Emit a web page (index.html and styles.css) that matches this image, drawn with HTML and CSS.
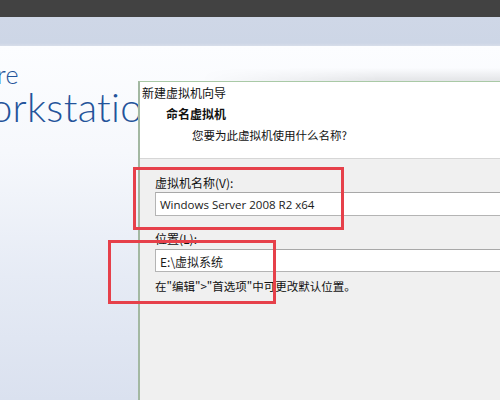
FILE: index.html
```html
<!DOCTYPE html>
<html lang="zh-CN">
<head>
<meta charset="utf-8">
<title>新建虚拟机向导</title>
<link rel="stylesheet" href="styles.css">
</head>
<body>
<div class="screen">
  <div class="topbar"></div>
  <div class="tabband"></div>
  <div class="desktop">
    <div class="brand">
      <div class="brand-vendor">VMware</div>
      <div class="brand-product">Workstation</div>
    </div>
    <div class="dialog">
      <div class="dialog-head">
        <div class="dialog-title">新建虚拟机向导</div>
        <div class="step-title">命名虚拟机</div>
        <div class="step-desc">您要为此虚拟机使用什么名称?</div>
      </div>
      <div class="dialog-body">
        <label class="field-label">虚拟机名称(V):</label>
        <div class="textbox">Windows Server 2008 R2 x64</div>
        <label class="field-label field-label-2">位置(L):</label>
        <div class="textbox textbox-2">E:\虚拟系统</div>
        <div class="hint">在"编辑"&gt;"首选项"中可更改默认位置。</div>
      </div>
    </div>
  </div>
  <div class="mark mark-name"></div>
  <div class="mark mark-location"></div>
</div>
</body>
</html>
```

FILE: styles.css
```css
* { box-sizing: border-box; }

html, body {
  margin: 0;
  padding: 0;
  width: 500px;
  height: 400px;
  overflow: hidden;
  background: #ffffff;
  font-family: "Noto Sans CJK SC", "Noto Sans", sans-serif;
}

.screen {
  position: relative;
  width: 500px;
  height: 400px;
  display: flex;
  flex-direction: column;
  overflow: hidden;
}

.topbar {
  height: 17px;
  background: #424242;
  flex: none;
}

.tabband {
  height: 29px;
  background: linear-gradient(#cfd7e7, #cdd6e6 90%, #d8deea);
  flex: none;
}

.desktop {
  flex: 1;
  display: flex;
  background: linear-gradient(to bottom, #fcfdff 0%, #f6f8fc 30%, #e6ebf5 65%, #dae1ef 100%);
}

/* product logo on the left, clipped by the window edge */
.brand {
  width: 138px;
  flex: none;
  overflow: hidden;
  color: #23539a;
  font-family: "Lato", "Open Sans", sans-serif;
  font-weight: 300;
  white-space: nowrap;
}

.brand-vendor {
  margin-top: 15px;
  margin-left: -75px;
  font-size: 25px;
  line-height: 26px;
  letter-spacing: 0.5px;
}

.brand-product {
  margin-left: -49px;
  font-size: 40px;
  line-height: 40px;
  letter-spacing: 0.3px;
}

.dialog {
  position: relative;
  flex: 1;
  margin-top: 35px;
  border-top: 1px solid #a9c9a6;
  border-left: 2px solid #a3b8a2;
  background: #f0f0f0;
}

/* faint shadow of the window edge */
.dialog::before {
  content: "";
  position: absolute;
  top: -14px;
  left: 60px;
  right: 0;
  height: 13px;
  background: linear-gradient(to bottom, rgba(0,0,0,0), rgba(0,0,0,0.09));
  -webkit-mask-image: linear-gradient(to right, transparent, #000 60%);
  mask-image: linear-gradient(to right, transparent, #000 60%);
}

.dialog-head {
  background: #ffffff;
  padding: 2px 0 14px 2px;
  border-bottom: 1px solid #d6d6d6;
  font-size: 12px;
  line-height: 18px;
  color: #111;
}

.step-title {
  margin-top: 3px;
  padding-left: 24px;
  font-weight: 700;
}

.step-desc {
  margin-top: 3px;
  padding-left: 50px;
  font-size: 11.5px;
}

.dialog-body {
  padding: 16px 0 0 15px;
  display: flex;
  flex-direction: column;
  font-size: 12px;
  line-height: 16px;
  color: #111;
}

.field-label { display: block; }

.field-label-2 { margin-top: 15px; }

.textbox {
  margin-top: 1px;
  margin-right: -20px;
  height: 24px;
  padding: 3px 4px 0 4px;
  background: #ffffff;
  border: 1px solid #b4b4b4;
  border-top-color: #a8a8a8;
  font-family: "Open Sans", "Noto Sans CJK SC", sans-serif;
  font-size: 11.5px;
  line-height: 17px;
  color: #1a1a1a;
}

.textbox-2 {
  margin-top: 2px;
  height: 23px;
  font-family: "Noto Sans CJK SC", sans-serif;
  font-size: 12px;
}

.hint {
  margin-top: 6px;
  font-size: 11.5px;
}

/* red annotation frames drawn over the dialog */
.mark {
  position: absolute;
  border: 3px solid #e6404a;
}

.mark-name {
  left: 133px;
  top: 167px;
  width: 211px;
  height: 63px;
}

.mark-location {
  left: 108px;
  top: 240px;
  width: 168px;
  height: 64px;
}
```
